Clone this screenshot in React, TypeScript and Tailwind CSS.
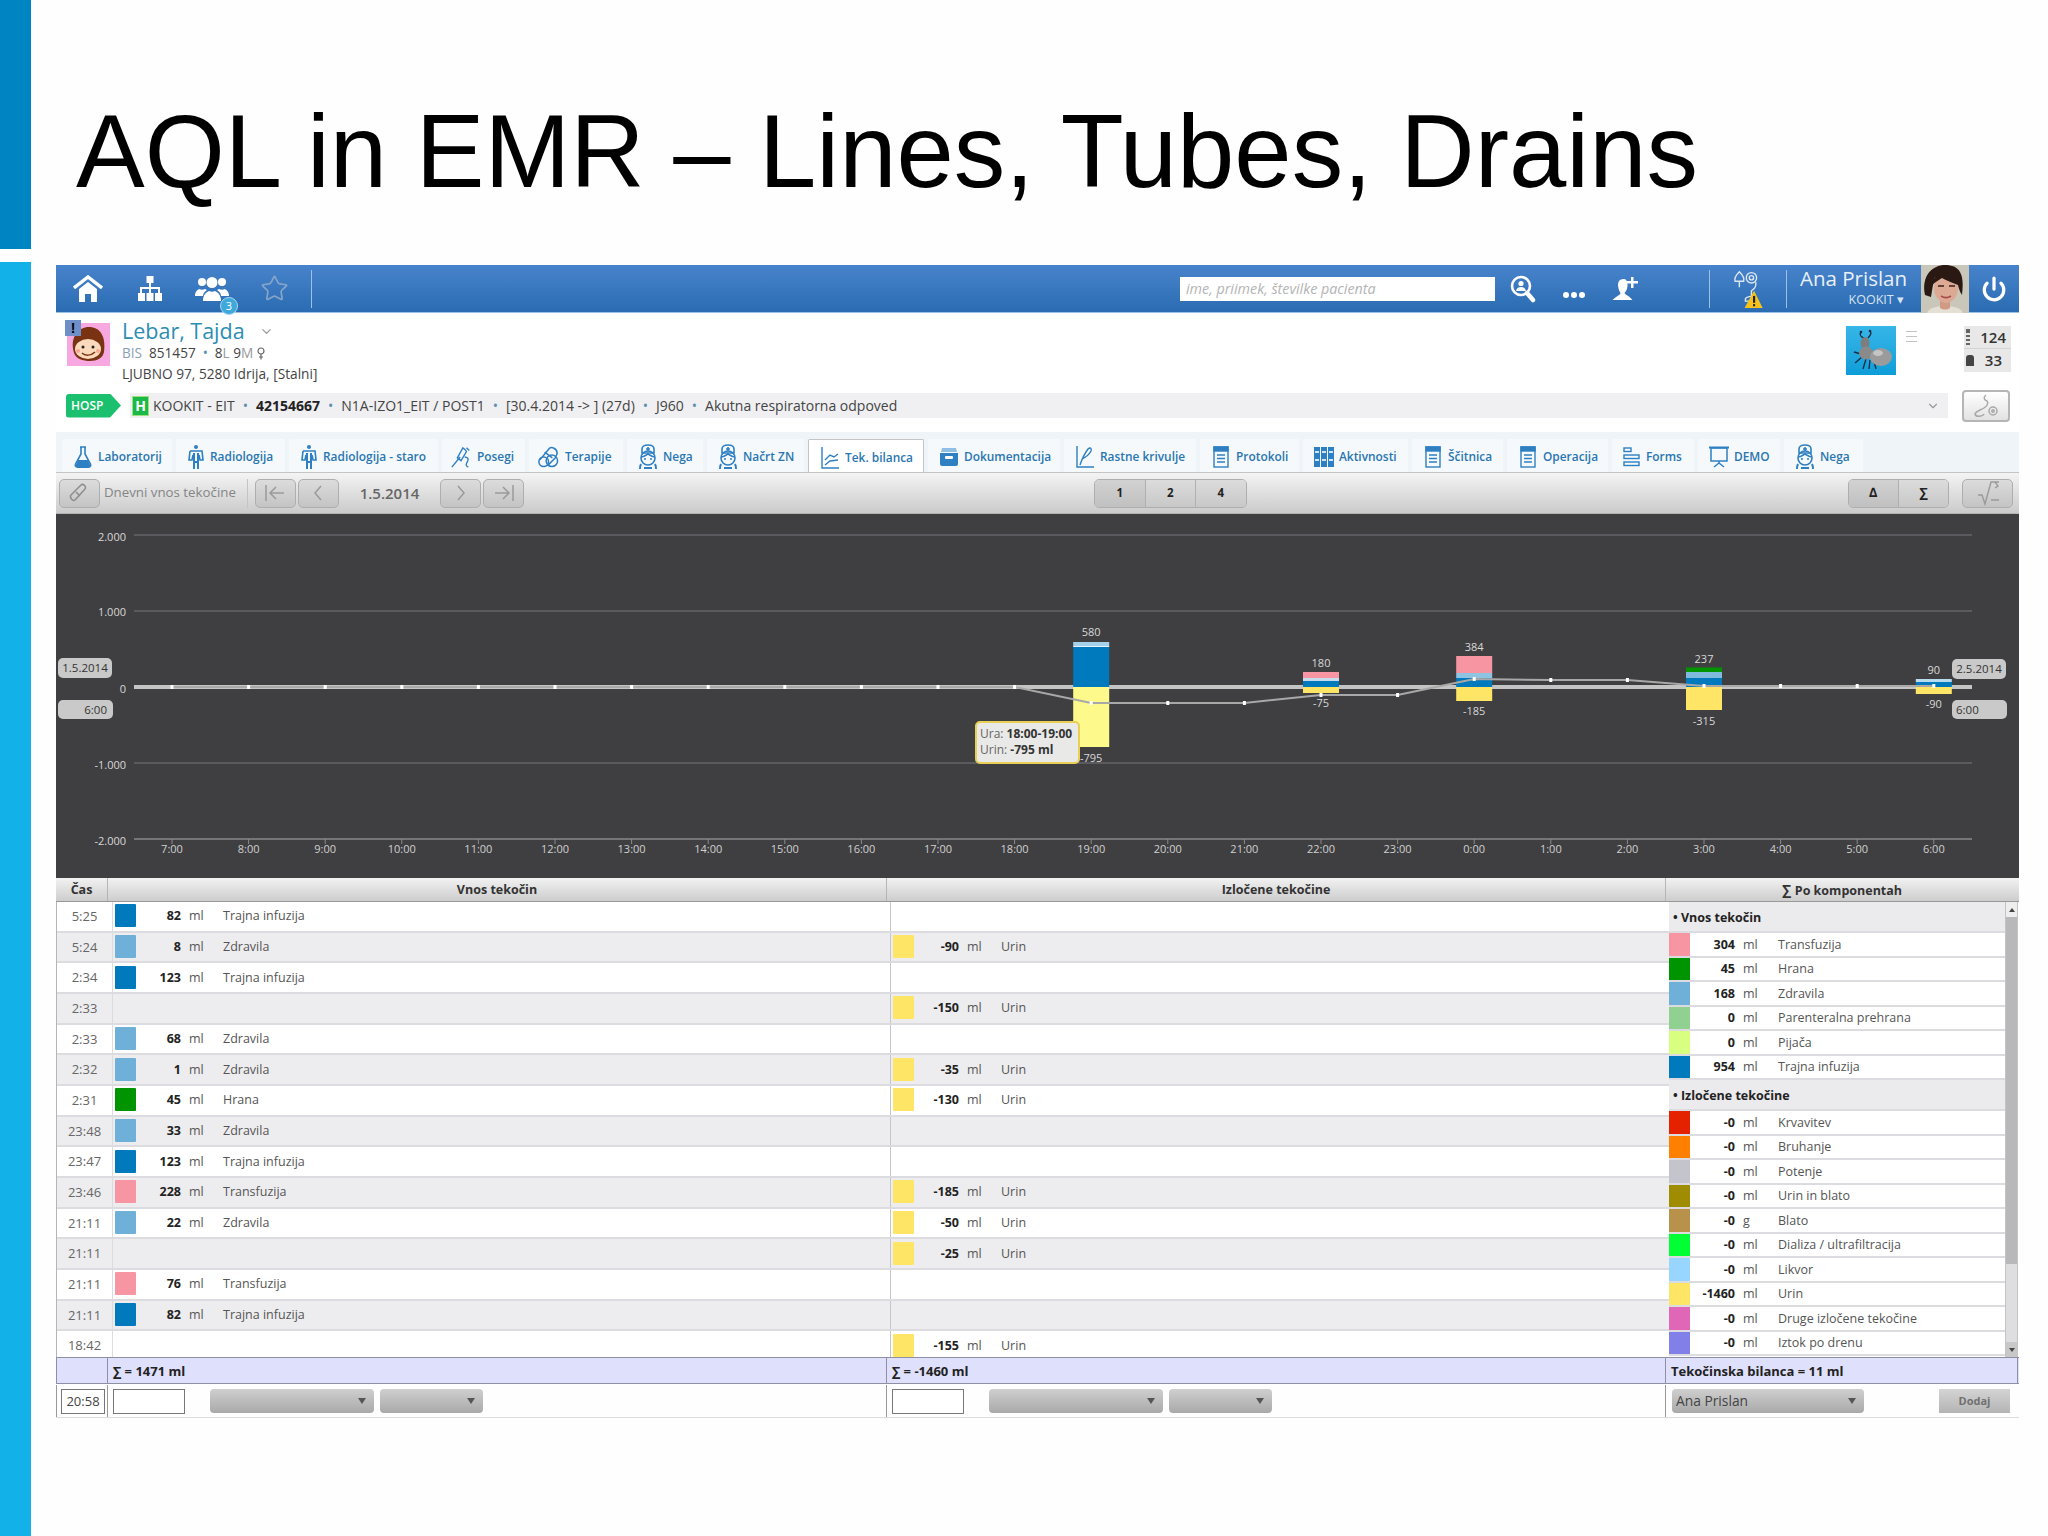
import React from 'react';
import { ChevronDown, Power, Star } from 'lucide-react';

const C = {
  trajna: 'bg-[#0079bd]',
  zdravila: 'bg-[#6fb0d8]',
  hrana: 'bg-[#009400]',
  transfuzija: 'bg-[#f795a3]',
  urin: 'bg-[#ffe566]',
};

type Side = { value: string; swatch: string; label: string } | null;

const rows: { time: string; inn: Side; out: Side }[] = [
  { time: '5:25', inn: { value: '82', swatch: C.trajna, label: 'Trajna infuzija' }, out: null },
  { time: '5:24', inn: { value: '8', swatch: C.zdravila, label: 'Zdravila' }, out: { value: '-90', swatch: C.urin, label: 'Urin' } },
  { time: '2:34', inn: { value: '123', swatch: C.trajna, label: 'Trajna infuzija' }, out: null },
  { time: '2:33', inn: null, out: { value: '-150', swatch: C.urin, label: 'Urin' } },
  { time: '2:33', inn: { value: '68', swatch: C.zdravila, label: 'Zdravila' }, out: null },
  { time: '2:32', inn: { value: '1', swatch: C.zdravila, label: 'Zdravila' }, out: { value: '-35', swatch: C.urin, label: 'Urin' } },
  { time: '2:31', inn: { value: '45', swatch: C.hrana, label: 'Hrana' }, out: { value: '-130', swatch: C.urin, label: 'Urin' } },
  { time: '23:48', inn: { value: '33', swatch: C.zdravila, label: 'Zdravila' }, out: null },
  { time: '23:47', inn: { value: '123', swatch: C.trajna, label: 'Trajna infuzija' }, out: null },
  { time: '23:46', inn: { value: '228', swatch: C.transfuzija, label: 'Transfuzija' }, out: { value: '-185', swatch: C.urin, label: 'Urin' } },
  { time: '21:11', inn: { value: '22', swatch: C.zdravila, label: 'Zdravila' }, out: { value: '-50', swatch: C.urin, label: 'Urin' } },
  { time: '21:11', inn: null, out: { value: '-25', swatch: C.urin, label: 'Urin' } },
  { time: '21:11', inn: { value: '76', swatch: C.transfuzija, label: 'Transfuzija' }, out: null },
  { time: '21:11', inn: { value: '82', swatch: C.trajna, label: 'Trajna infuzija' }, out: null },
  { time: '18:42', inn: null, out: { value: '-155', swatch: C.urin, label: 'Urin' } },
];

const intake = [
  { value: '304', unit: 'ml', swatch: C.transfuzija, label: 'Transfuzija' },
  { value: '45', unit: 'ml', swatch: C.hrana, label: 'Hrana' },
  { value: '168', unit: 'ml', swatch: C.zdravila, label: 'Zdravila' },
  { value: '0', unit: 'ml', swatch: 'bg-[#90d090]', label: 'Parenteralna prehrana' },
  { value: '0', unit: 'ml', swatch: 'bg-[#d8ff80]', label: 'Pijača' },
  { value: '954', unit: 'ml', swatch: C.trajna, label: 'Trajna infuzija' },
];

const output = [
  { value: '-0', unit: 'ml', swatch: 'bg-[#e52200]', label: 'Krvavitev' },
  { value: '-0', unit: 'ml', swatch: 'bg-[#ff7f00]', label: 'Bruhanje' },
  { value: '-0', unit: 'ml', swatch: 'bg-[#c4c4cc]', label: 'Potenje' },
  { value: '-0', unit: 'ml', swatch: 'bg-[#a08c00]', label: 'Urin in blato' },
  { value: '-0', unit: 'g', swatch: 'bg-[#b8924a]', label: 'Blato' },
  { value: '-0', unit: 'ml', swatch: 'bg-[#00ff33]', label: 'Dializa / ultrafiltracija' },
  { value: '-0', unit: 'ml', swatch: 'bg-[#99d6ff]', label: 'Likvor' },
  { value: '-1460', unit: 'ml', swatch: C.urin, label: 'Urin' },
  { value: '-0', unit: 'ml', swatch: 'bg-[#e066b8]', label: 'Druge izločene tekočine' },
  { value: '-0', unit: 'ml', swatch: 'bg-[#8080e8]', label: 'Iztok po drenu' },
];

/* ---- small icons ---- */
const Blue = '#2f80c2';

const Flask = () => (
  <svg width="20" height="24" viewBox="0 0 20 24" fill="none" stroke={Blue} strokeWidth="1.6">
    <path d="M7 2h6M8 2v7L2.5 19a2.2 2.2 0 0 0 2 3.2h11a2.2 2.2 0 0 0 2-3.2L12 9V2" />
    <path d="M5 15h10l3 7H2z" fill={Blue} stroke="none" />
  </svg>
);
const Body = () => (
  <svg width="18" height="26" viewBox="0 0 18 26" fill="none" stroke={Blue} strokeWidth="1.6">
    <circle cx="9" cy="3" r="2" fill={Blue} stroke="none" />
    <path d="M3 7h12l1 9h-3l-1-5M3 7 2 16h3l1-5" />
    <path d="M7 9v16M11 9v16M7 18h4" strokeWidth="2" />
  </svg>
);
const Syringe = () => (
  <svg width="22" height="24" viewBox="0 0 24 24" fill="none" stroke={Blue} strokeWidth="1.5" className="-ml-[3px]">
    <path d="M2 23 11 12M14 2c2 1 3 2 4 4l-6 10-4-3zM18 2l3 3" />
    <path d="M16 12c3 0 5 2 3 5s-2 5 1 6" />
  </svg>
);
const Pill = () => (
  <svg width="23" height="24" viewBox="0 0 24 24" fill="none" stroke={Blue} strokeWidth="1.6" className="-ml-[3px]">
    <path d="M3 15 13 3c2-2 8 0 8 5 0 1-1 3-2 4" />
    <circle cx="15.5" cy="16" r="6" />
    <path d="M8 7l8 6M11 21l9-9" />
    <circle cx="7" cy="17" r="5" />
  </svg>
);
const Nurse = () => (
  <svg width="20" height="26" viewBox="0 0 20 26" fill="none" stroke={Blue} strokeWidth="1.6">
    <path d="M4 9V5c0-2 2-4 6-4s6 2 6 4v4z" />
    <path d="M10 3v4M8 5h4" />
    <circle cx="10" cy="14" r="7" />
    <path d="M3 13c3 0 5-2 7-3 2 1 4 3 7 3" />
    <circle cx="7" cy="15" r="1" fill={Blue} stroke="none" />
    <circle cx="13" cy="15" r="1" fill={Blue} stroke="none" />
    <path d="M3 20c-1 2-1 3-1 5M17 20c1 2 1 3 1 5M6 24h8" strokeWidth="2" />
  </svg>
);
const Curve = ({ pen }: { pen?: boolean }) => (
  <svg width="20" height="24" viewBox="0 0 20 24" fill="none" stroke={Blue} strokeWidth="1.4">
    <path d="M2 1v21h17" />
    {pen ? <path d="M5 20c2-6 5-12 8-16 2-2 4-1 3 2-2 4-5 6-9 8" /> : <path d="M5 14l5-5 4 2 4-3M5 19l5-4 8-1" />}
  </svg>
);
const Box = () => (
  <svg width="20" height="22" viewBox="0 0 20 22">
    <path d="M3 2h14l1 4H2z" fill="#8fbfe2" />
    <path d="M1 7h18v11a2 2 0 0 1-2 2H3a2 2 0 0 1-2-2z" fill={Blue} />
    <rect x="6" y="10" width="8" height="3" rx="1" fill="#fff" />
  </svg>
);
const Doc = () => (
  <svg width="16" height="22" viewBox="0 0 16 22" fill="none" stroke={Blue} strokeWidth="1.4" className="ml-[2px] mr-[2px]">
    <rect x="1" y="1" width="14" height="20" />
    <rect x="1" y="1" width="14" height="4" fill={Blue} />
    <path d="M4 9h8M4 12.5h8M4 16h8" />
  </svg>
);
const Columns = () => (
  <svg width="20" height="20" viewBox="0 0 20 20" fill={Blue}>
    <rect x="0" y="0" width="6" height="20" />
    <rect x="7" y="0" width="6" height="20" />
    <rect x="14" y="0" width="6" height="20" />
    <path d="M1 12h4v2H1zM8 12h4v2H8zM15 12h4v2h-4zM1 4h4v2H1zM8 4h4v2H8zM15 4h4v2h-4z" fill="#cfe3f3" />
  </svg>
);
const Forms = () => (
  <svg width="18" height="20" viewBox="0 0 18 20" fill="none" stroke={Blue} strokeWidth="1.4">
    <rect x="1" y="1" width="7" height="3.5" />
    <rect x="1" y="8" width="15" height="3.5" />
    <rect x="1" y="15" width="15" height="3.5" />
  </svg>
);
const Board = () => (
  <svg width="20" height="22" viewBox="0 0 20 22" fill="none" stroke={Blue} strokeWidth="1.5">
    <path d="M0 1.5h20" strokeWidth="2" />
    <rect x="2" y="2" width="16" height="13" />
    <path d="M10 15v2M10 17l-5 4M10 17l5 4" />
  </svg>
);

const tabs: { label: string; w: string; icon: React.ReactNode; active?: boolean }[] = [
  { label: 'Laboratorij', w: 'w-[110px]', icon: <Flask /> },
  { label: 'Radiologija', w: 'w-[109px]', icon: <Body /> },
  { label: 'Radiologija - staro', w: 'w-[149px]', icon: <Body /> },
  { label: 'Posegi', w: 'w-[83px]', icon: <Syringe /> },
  { label: 'Terapije', w: 'w-[94px]', icon: <Pill /> },
  { label: 'Nega', w: 'w-[76px]', icon: <Nurse /> },
  { label: 'Načrt ZN', w: 'w-[97px]', icon: <Nurse /> },
  { label: 'Tek. bilanca', w: 'w-[116px]', icon: <Curve />, active: true },
  { label: 'Dokumentacija', w: 'w-[132px]', icon: <Box /> },
  { label: 'Rastne krivulje', w: 'w-[132px]', icon: <Curve pen /> },
  { label: 'Protokoli', w: 'w-[99px]', icon: <Doc /> },
  { label: 'Aktivnosti', w: 'w-[105px]', icon: <Columns /> },
  { label: 'Ščitnica', w: 'w-[91px]', icon: <Doc /> },
  { label: 'Operacija', w: 'w-[101px]', icon: <Doc /> },
  { label: 'Forms', w: 'w-[82px]', icon: <Forms /> },
  { label: 'DEMO', w: 'w-[82px]', icon: <Board /> },
  { label: 'Nega', w: 'w-[79px]', icon: <Nurse /> },
];

/* ---- header ---- */
const HomeIcon = () => (
  <svg width="30" height="28" viewBox="0 0 30 28" fill="#fff">
    <path d="M1 13 15 2l14 11" fill="none" stroke="#fff" strokeWidth="3.4" />
    <path d="M6 14 15 7l9 7v13h-6v-8h-6v8H6z" />
  </svg>
);
const OrgIcon = () => (
  <svg width="24" height="26" viewBox="0 0 24 26" fill="#fff">
    <rect x="8.5" y="0" width="7" height="7" />
    <rect x="0" y="17" width="7" height="8" />
    <rect x="8.5" y="17" width="7" height="8" />
    <rect x="17" y="17" width="7" height="8" />
    <path d="M11 7h2v4h9v6h-2v-4h-7v4h-2v-4H4v4H2v-6h9z" />
  </svg>
);
const PeopleIcon = () => (
  <svg width="36" height="26" viewBox="0 0 36 26" fill="#fff">
    <circle cx="8" cy="6" r="4" />
    <path d="M1 20c0-5 3-6 4-7 2 1 4 1 6 0l2 1c-3 2-4 4-4 6z" />
    <circle cx="28" cy="6" r="4" />
    <path d="M35 20c0-5-3-6-4-7-2 1-4 1-6 0l-2 1c3 2 4 4 4 6z" />
    <circle cx="18" cy="6.5" r="5.5" />
    <path d="M9 25c0-7 4-9 6-10 2 1 4 1 6 0 2 1 6 3 6 10z" />
  </svg>
);
const SearchIcon = () => (
  <svg width="26" height="28" viewBox="0 0 26 28" fill="none" stroke="#fff" strokeWidth="2.6">
    <circle cx="11" cy="11" r="9" />
    <path d="m17 18 6 7" strokeWidth="4.5" strokeLinecap="round" />
    <circle cx="11" cy="8.5" r="2.6" fill="#fff" stroke="none" />
    <path d="M6 16c1-3 2-4 5-4s4 1 5 4z" fill="#fff" stroke="none" />
  </svg>
);
const DotsIcon = () => (
  <svg width="24" height="8" viewBox="0 0 24 8" fill="#fff">
    <circle cx="4" cy="4" r="3" />
    <circle cx="12" cy="4" r="3" />
    <circle cx="20" cy="4" r="3" />
  </svg>
);
const AddUser = () => (
  <svg width="26" height="28" viewBox="0 0 26 28" fill="#fff">
    <path d="M12 4c-4 0-6 2-6 6s2 7 2.500 8c0 2-4 3-8 7h20c-3-4-7-5-8-7 2-2 3-5 3-8s-1-6-3.500-6z" />
    <path d="M19 2h2.500v4H26v2.500h-4.500V13H19V8.500h-4V6h4z" />
  </svg>
);
const AlertUser = () => (
  <svg width="32" height="38" viewBox="0 0 34 44" fill="none">
    <g stroke="#dbe7f3" strokeWidth="1.6">
      <path d="M7 2c-4 4-6 8-5 11h10c1-3-1-7-5-11zM7 13v7" />
      <circle cx="21" cy="9" r="6" />
      <circle cx="21" cy="9" r="2.500" />
      <path d="M26 14c1 6-2 8-5 10v6c-1 1-6 1-7 3v3h9" />
    </g>
    <path d="M24 24 34 44H13z" fill="#f6c21a" />
    <rect x="22.800" y="30" width="2.500" height="8" fill="#222" />
    <rect x="22.800" y="39.500" width="2.500" height="2.500" fill="#222" />
  </svg>
);

const Photo = () => (
  <svg width="48" height="48" viewBox="0 0 48 48" className="shrink-0">
    <rect width="48" height="48" fill="#c9c6ba" />
    <path d="M6 48c2-5 9-7 18-7s16 2 18 7z" fill="#e4e0d6" />
    <path d="M19 34h10v9c-3 2-7 2-10 0z" fill="#d09a84" />
    <path d="M4 30C0 10 12 0 24 0c14 0 20 8 17 30-3-4-4-10-5-14-8 0-18-1-22-4-2 6-3 14-4 20z" fill="#2a1812" />
    <ellipse cx="25" cy="23" rx="12" ry="15" fill="#dcaa94" />
    <path d="M11 20C12 10 22 5 36 9c2 4 2 8 1 11-6-2-12-5-16-7-3 2-7 4-10 7z" fill="#2a1812" />
    <path d="M17 21h6M28 21h6" stroke="#3a2018" strokeWidth="1.600" />
    <path d="M20 31c3 2 7 2 10 0" stroke="#a84a4a" strokeWidth="1.600" fill="none" />
  </svg>
);

const Avatar = () => (
  <div className="relative w-[43px] h-[43px] bg-[#f8a8e0] shrink-0">
    <svg width="43" height="43" viewBox="0 0 43 43">
      <path d="M7 30C2 14 12 4 22 4c11 0 17 9 15 25-1 6-7 9-14 9S9 36 7 30z" fill="#7a3312" />
      <ellipse cx="21" cy="26" rx="13" ry="10" fill="#fbd9bc" />
      <circle cx="16" cy="24" r="1.500" fill="#222" />
      <circle cx="26" cy="24" r="1.500" fill="#222" />
      <path d="M15 30c3 3 9 3 13-1" stroke="#7a3312" strokeWidth="1.500" fill="none" />
      <circle cx="11" cy="28" r="2" fill="#f4a890" />
      <circle cx="31" cy="28" r="2" fill="#f4a890" />
    </svg>
    <div className="absolute -left-[2px] -top-[3px] w-[16px] h-[16px] bg-[#6f8fc8] text-center font-['Liberation_Sans',sans-serif] font-bold text-[14px] leading-[16px] text-black">
      !
    </div>
  </div>
);

const Ant = () => (
  <div className="w-[50px] h-[49px] mt-[3px] bg-gradient-to-b from-[#35b6e8] to-[#0c9dd8] shrink-0">
    <svg width="50" height="49" viewBox="0 0 50 49" fill="none">
      <g stroke="#12304a" strokeWidth="1.400">
        <path d="M15 6c-2 3 0 5 3 6M24 5c2 2 0 5-2 7M15 28l-7-2M16 31l-7 6M20 33l-3 10M24 34l-1 9M28 35l2 8" />
      </g>
      <circle cx="15" cy="6" r="1.300" fill="#12304a" />
      <circle cx="24" cy="5" r="1.300" fill="#12304a" />
      <ellipse cx="19" cy="17" rx="4.500" ry="6" fill="#7d7d7d" />
      <ellipse cx="20" cy="27" rx="7" ry="6.500" fill="#8a8a8a" />
      <ellipse cx="35" cy="31" rx="11" ry="9" fill="#9b9b9b" />
      <ellipse cx="32" cy="27" rx="5" ry="3" fill="#c5c5c5" />
    </svg>
  </div>
);

const Toolbutton = ({ className, children }: { className: string; children?: React.ReactNode }) => (
  <div className={`h-[29px] flex items-center justify-center rounded-[5px] border border-[#aeaeae] bg-gradient-to-b from-[#dcdcdc] to-[#c4c4c4] text-[#8d8d8d] ${className}`}>
    {children}
  </div>
);

const Select = ({ className, label }: { className: string; label?: string }) => (
  <div className={`h-[24px] flex items-center justify-between pl-[4px] pr-[8px] rounded-[4px] bg-gradient-to-b from-[#cfcfcf] to-[#a9a9a9] text-[13.800px] text-[#444] ${className}`}>
    <span>{label}</span>
    <span className="w-0 h-0 border-x-[4px] border-x-transparent border-t-[6px] border-t-[#555]" />
  </div>
);

/* ---- chart ---- */
const hours = ['7:00','8:00','9:00','10:00','11:00','12:00','13:00','14:00','15:00','16:00','17:00','18:00','19:00','20:00','21:00','22:00','23:00','0:00','1:00','2:00','3:00','4:00','5:00','6:00'];
const tickX = (i: number) => 172 + i * 76.6;
const lineY = [687,687,687,687,687,687,687,687,687,687,687,687,703,703,703,695,695,679,680,680,686,686,686,686];

const bars = [
  { i: 12, top: 580, bot: '-795', topY: 632, botY: 758, segs: [[642, 646, '#a5d2ea'], [646, 647, '#e6f4fb'], [647, 687, '#0079bd'], [687, 747, '#fdf98a']] },
  { i: 15, top: 180, bot: '-75', topY: 663, botY: 703, segs: [[672, 678, '#f795a3'], [678, 681, '#c7dcec'], [681, 687, '#0079bd'], [687, 693, '#ffe566']] },
  { i: 17, top: 384, bot: '-185', topY: 647, botY: 711, segs: [[656, 673, '#f795a3'], [673, 678, '#8fc3e2'], [678, 687, '#0079bd'], [687, 701, '#ffe566']] },
  { i: 20, top: 237, bot: '-315', topY: 659, botY: 721, segs: [[667.5, 672, '#009400'], [672, 678, '#7fb9dc'], [678, 687, '#0079bd'], [687, 710, '#ffe566']] },
  { i: 23, top: 90, bot: '-90', topY: 670, botY: 704, segs: [[679, 682, '#b9dbee'], [682, 687, '#0079bd'], [687, 694, '#ffe566']] },
] as const;

const Chart = () => (
  <div className="relative h-[364px] bg-[#3f3f41]">
    <svg width="1963" height="364" viewBox="56 514 1963 364" fontFamily="Open Sans, sans-serif" fontSize="11">
      {[535, 611, 763].map((y) => (
        <line key={y} x1="134" x2="1972" y1={y} y2={y} stroke="#66666a" strokeWidth="1.500" />
      ))}
      <line x1="134" x2="1972" y1="839" y2="839" stroke="#8a8a8c" strokeWidth="1.500" />
      {hours.map((h, i) => (
        <g key={h}>
          <line x1={tickX(i)} x2={tickX(i)} y1="839" y2="844" stroke="#8a8a8c" />
          <text x={tickX(i)} y="853" textAnchor="middle" fill="#d0d0d0">{h}</text>
        </g>
      ))}
      {[['2.000', 541], ['1.000', 616], ['0', 693], ['-1.000', 769], ['-2.000', 845]].map(([t, y]) => (
        <text key={t} x="126" y={y} textAnchor="end" fill="#d8d8d8">{t}</text>
      ))}
      <rect x="134" y="685" width="1838" height="4" fill="#c4c4c4" />
      {bars.map((b) => (
        <g key={b.i}>
          {b.segs.map(([y1, y2, c]) => (
            <rect key={y1} x={tickX(b.i) - 18} y={y1} width="36" height={y2 - y1} fill={c} />
          ))}
          <text x={tickX(b.i)} y={b.topY + 4} textAnchor="middle" fill="#d8d8d8">{b.top}</text>
          <text x={tickX(b.i)} y={b.botY + 4} textAnchor="middle" fill="#d8d8d8">{b.bot}</text>
        </g>
      ))}
      <polyline
        points={lineY.map((y, i) => `${tickX(i)},${y}`).join(' ')}
        fill="none"
        stroke="#a8a8a8"
        strokeWidth="2"
      />
      {lineY.map((y, i) => (
        <rect key={i} x={tickX(i) - 1.5} y={y - 2} width="3" height="4" fill="#fff" />
      ))}
      <g fontSize="11.500" fill="#333">
        <rect x="58" y="658" width="54" height="20" rx="5" fill="#c9c9c9" />
        <text x="85" y="672" textAnchor="middle">1.5.2014</text>
        <rect x="58" y="700" width="55" height="19" rx="5" fill="#c9c9c9" />
        <text x="107" y="714" textAnchor="end">6:00</text>
        <rect x="1952" y="659" width="54" height="20" rx="5" fill="#c9c9c9" />
        <text x="1979" y="673" textAnchor="middle">2.5.2014</text>
        <rect x="1952" y="700" width="55" height="19" rx="5" fill="#c9c9c9" />
        <text x="1956" y="714">6:00</text>
      </g>
    </svg>
    <div className="absolute left-[919px] top-[207px] w-[105px] h-[43px] rounded-[5px] border-2 border-[#e9cf55] bg-[#e9e9e7] pl-[3px] text-[12px] leading-[16px] pt-[3px] text-[#666] whitespace-nowrap">
      <div>Ura: <b className="text-[#333]">18:00-19:00</b></div>
      <div>Urin: <b className="text-[#333]">-795 ml</b></div>
    </div>
  </div>
);

/* ---- table ---- */
const Entry = ({ data }: { data: Side }) => {
  if (!data) return null;
  return (
    <>
      <div className={`w-[21px] h-[23px] shrink-0 rounded-[1px] -mt-[1px] ${data.swatch}`} />
      <div className="w-[45px] pt-[1px] text-right font-bold text-[#222] shrink-0">{data.value}</div>
      <div className="w-[42px] pt-[1px] pl-[8px] text-[#555] shrink-0">ml</div>
      <div className="pt-[1px] text-[#555]">{data.label}</div>
    </>
  );
};

const TableHead = () => (
  <div className="flex h-[24px] bg-gradient-to-b from-[#f2f2f2] to-[#cdcdcd] border-b border-[#999] text-[12.500px] font-bold text-[#333] text-center leading-[24px]">
    <div className="w-[51px]">Čas</div>
    <div className="w-[779px] border-l border-[#b5b5b5]">Vnos tekočin</div>
    <div className="w-[779px] border-l border-[#b5b5b5]">Izločene tekočine</div>
    <div className="w-[353px] border-l border-[#b5b5b5]"><span className="text-[14px] mr-[4px]">∑</span>Po komponentah</div>
  </div>
);

const Rows = () => (
  <div className="w-[1613px] h-[455px] overflow-hidden text-[12.500px] border-l border-[#b5b5b5]">
    {rows.map((r, i) => (
      <div
        key={i}
        className={`flex h-[30.670px] items-center border-b-2 border-[#dcdce0] ${i % 2 ? 'bg-[#ededef]' : 'bg-white'}`}
      >
        <div className="w-[55px] pt-[1px] text-center text-[13px] text-[#666] shrink-0">{r.time}</div>
        <div className="flex items-center w-[778px] pl-[2px] h-full shrink-0 border-l border-[#dcdce0]">
          <Entry data={r.inn} />
        </div>
        <div className="flex items-center w-[779px] pl-[2px] h-full border-l border-[#c5c5cc]">
          <Entry data={r.out} />
        </div>
      </div>
    ))}
  </div>
);

const SummaryRow = ({ swatch, value, unit, label }: { swatch: string; value: string; unit: string; label: string }) => (
  <div className="flex h-[24.500px] items-center bg-white border-b-2 border-[#dcdce0] text-[12.500px]">
    <div className={`w-[21px] h-full shrink-0 ${swatch}`} />
    <div className="w-[45px] pt-[2px] text-right font-bold text-[#222]">{value}</div>
    <div className="w-[43px] pt-[2px] pl-[8px] text-[#555]">{unit}</div>
    <div className="pt-[2px] text-[#555]">{label}</div>
  </div>
);

const GroupHead = ({ children }: { children: React.ReactNode }) => (
  <div className="h-[31px] bg-[#ebebed] flex items-center pl-[4px] pt-[3px] text-[12.500px] font-bold text-[#222] border-b-2 border-[#dcdce0]">
    {children}
  </div>
);

const Components = () => (
  <div className="w-[349px] h-[455px] flex overflow-hidden">
    <div className="w-[336px] shrink-0">
      <GroupHead>• Vnos tekočin</GroupHead>
      {intake.map((r) => <SummaryRow key={r.label} {...r} />)}
      <GroupHead>• Izločene tekočine</GroupHead>
      {output.map((r) => <SummaryRow key={r.label} {...r} />)}
    </div>
    <div className="w-[13px] flex flex-col bg-[#dedee0] border-x border-[#c4c4c4]">
      <div className="h-[15px] flex items-center justify-center bg-[#eeeeee]">
        <span className="w-0 h-0 border-x-[3px] border-x-transparent border-b-[4px] border-b-[#444]" />
      </div>
      <div className="h-[347px] bg-[#b8b8ba]" />
      <div className="flex-1" />
      <div className="h-[15px] flex items-center justify-center bg-[#c8c8c8]">
        <span className="w-0 h-0 border-x-[3px] border-x-transparent border-t-[4px] border-t-[#444]" />
      </div>
    </div>
  </div>
);

const Sums = () => (
  <div className="flex h-[27px] bg-[#dfe0fb] border-y border-[#8e8ea4] text-[13px] font-bold text-[#222] leading-[27px]">
    <div className="w-[51px] border-l border-[#8e8ea4]" />
    <div className="w-[779px] border-l border-[#8e8ea4] pl-[5px]">∑ = 1471 ml</div>
    <div className="w-[779px] border-l border-[#8e8ea4] pl-[5px]">∑ = -1460 ml</div>
    <div className="w-[353px] border-x border-[#8e8ea4] pl-[5px]">Tekočinska bilanca = 11 ml</div>
  </div>
);

const InputBox = ({ className, children }: { className: string; children?: React.ReactNode }) => (
  <div className={`h-[25px] border border-[#777] bg-white text-[13px] text-[#444] text-center leading-[23px] shrink-0 ${className}`}>{children}</div>
);

const Inputs = () => (
  <div className="flex h-[34px] pt-[1px] border-b border-[#ddd]">
    <div className="w-[51px] flex items-center pl-[4px] border-l border-[#999]">
      <InputBox className="w-[44px]">20:58</InputBox>
    </div>
    <div className="w-[779px] flex items-center border-l border-[#999] pl-[5px] gap-[6px]">
      <InputBox className="w-[72px] mr-[19px]" />
      <Select className="w-[164px]" />
      <Select className="w-[103px]" />
    </div>
    <div className="w-[779px] flex items-center border-l border-[#999] pl-[5px] gap-[6px]">
      <InputBox className="w-[72px] mr-[19px]" />
      <Select className="w-[174px]" />
      <Select className="w-[103px]" />
    </div>
    <div className="w-[353px] flex items-center justify-between border-l border-[#999] pl-[6px] pr-[8px]">
      <Select className="w-[192px]" label="Ana Prislan" />
      <div className="w-[71px] h-[24px] bg-gradient-to-b from-[#d4d4d4] to-[#b4b4b4] text-center text-[11px] font-bold leading-[24px] text-[#707070]">Dodaj</div>
    </div>
  </div>
);

const Female = () => (
  <svg width="8" height="13" viewBox="0 0 8 13" fill="none" stroke="#666" strokeWidth="1.200" className="ml-[4px]">
    <circle cx="4" cy="4" r="3" />
    <path d="M4 7v5.500M2 10h4" />
  </svg>
);

const Dot = () => <span className="mx-[8px] text-[#5c8fb0]">•</span>;

export default function App() {
  return (
    <div className="w-[2048px] h-[1536px] flex bg-[#fefefe] overflow-hidden font-['Open_Sans',sans-serif]">
      <div className="w-[31px] shrink-0 flex flex-col gap-[13px]">
        <div className="h-[249px] bg-[#0085c3]" />
        <div className="flex-1 bg-[#12b2e8]" />
      </div>

      <div className="flex-1 flex flex-col">
        <div className="h-[265px] pt-[100px] pl-[45px] font-['Liberation_Sans',sans-serif] text-[103px] leading-none text-black whitespace-nowrap">
          AQL in EMR – Lines, Tubes, Drains
        </div>

        <div className="ml-[25px] w-[1963px] flex flex-col">
          {/* top bar */}
          <div className="h-[48px] flex items-center bg-gradient-to-b from-[#4783cc] to-[#2a6cb2] border-b border-[#9cc0e6] text-white">
            <div className="w-[63px] flex justify-center"><HomeIcon /></div>
            <div className="w-[62px] flex justify-center"><OrgIcon /></div>
            <div className="w-[62px] flex justify-center relative">
              <PeopleIcon />
              <div className="absolute left-[39px] top-[21px] w-[18px] h-[18px] rounded-full bg-[#3fa9dc] border border-[#a8d8f0] text-[11px] leading-[16px] text-center">3</div>
            </div>
            <div className="w-[62px] flex justify-center">
              <Star size={29} strokeWidth={1.4} className="text-[#86a4c9]" />
            </div>
            <div className="w-[1px] h-[38px] ml-[6px] bg-[#9cc0e6]" />
            <div className="ml-[868px] w-[315px] h-[24px] bg-white text-[14.300px] italic text-[#b4b4b4] pl-[6px] leading-[24px] whitespace-nowrap">
              ime, priimek, številke pacienta
            </div>
            <div className="ml-[15px]"><SearchIcon /></div>
            <div className="ml-[26px] mt-[12px]"><DotsIcon /></div>
            <div className="ml-[26px]"><AddUser /></div>
            <div className="w-[1px] h-[38px] ml-[71px] bg-[#9cc0e6]" />
            <div className="ml-[22px]"><AlertUser /></div>
            <div className="w-[1px] h-[38px] ml-[22px] bg-[#9cc0e6]" />
            <div className="ml-[13px] w-[121px] flex flex-col -mt-[4px]">
              <div className="text-[20.500px] leading-[25px] text-[#e8f0f8] whitespace-nowrap">Ana Prislan</div>
              <div className="text-[12.500px] leading-[17px] text-right pr-[17px] text-[#d7e4f2] whitespace-nowrap">KOOKIT ▾</div>
            </div>
            <Photo />
            <div className="flex-1 flex justify-center">
              <Power size={26} strokeWidth={3} className="text-white" />
            </div>
          </div>

          {/* patient */}
          <div className="h-[119px] flex flex-col bg-white">
            <div className="h-[80px] flex pl-[11px] pt-[10px] pr-[8px]">
              <Avatar />
              <div className="ml-[12px] -mt-[4px] text-[#444]">
                <div className="h-[24px] flex items-center gap-[14px] text-[21.500px] text-[#2c8db4]">
                  Lebar, Tajda <ChevronDown size={15} className="text-[#999]" />
                </div>
                <div className="h-[20px] flex items-center text-[13.600px]">
                  <span className="text-[#8aa0b4] mr-[7px]">BIS</span> 851457 <span className="mx-[7px] text-[#5c8fb0]">•</span> 8<span className="text-[#999]">L</span>&nbsp;9<span className="text-[#999]">M</span><Female />
                </div>
                <div className="h-[22px] flex items-center text-[13.700px] pt-[1px]">LJUBNO 97, 5280 Idrija, [Stalni]</div>
              </div>
              <div className="ml-auto flex">
                <Ant />
                <div className="ml-[10px] mt-[8px] w-[11px] h-[11px] border-y border-[#c2c2c2] relative">
                  <div className="absolute top-[4px] w-full h-[1px] bg-[#c2c2c2]" />
                </div>
                <div className="ml-[47px] mt-[3px] w-[47px] h-[46px] bg-[#e8e8e8] text-[15px] text-[#333] font-semibold">
                  <div className="h-[23px] flex items-center justify-between pl-[2px] pr-[5px] border-b border-[#d4d4d4]">
                    <span className="w-[4px] h-[16px] border-y-[2px] border-[#666] [background:repeating-linear-gradient(#666_0_2px,transparent_2px_4px)]" />
                    124
                  </div>
                  <div className="h-[23px] flex items-center justify-between pl-[2px] pr-[9px]">
                    <span className="w-[8px] h-[11px] bg-[#444] rounded-t-[3px]" />
                    33
                  </div>
                </div>
              </div>
            </div>

            <div className="h-[25px] flex items-center pl-[10px] pr-[8px]">
              <div className="w-[55px] h-[24px] bg-[#1bc06e] text-white text-[12px] font-semibold leading-[24px] pl-[5px] [clip-path:polygon(0_0,80%_0,100%_50%,80%_100%,0_100%)] rounded-l-[3px]">HOSP</div>
              <div className="ml-[9px] w-[1818px] h-[25px] bg-[#f0f0f2] flex items-center text-[14px] text-[#444] whitespace-pre">
                <span className="w-[17px] h-[20px] ml-[2px] mr-[4px] bg-[#1bb84a] border border-[#9be27e] text-white font-bold text-[14px] leading-[18px] text-center">H</span>
                KOOKIT - EIT<Dot /><b className="font-bold text-[#222]">42154667</b><Dot />N1A-IZO1_EIT / POST1<Dot />[30.4.2014 -&gt; ] (27d)<Dot />J960<Dot />Akutna respiratorna odpoved
                <ChevronDown size={14} className="ml-auto mr-[8px] text-[#999]" />
              </div>
              <div className="ml-[14px] w-[48px] h-[32px] rounded-[4px] border-2 border-[#b5b5b5] bg-gradient-to-b from-white to-[#e2e2e2] flex items-center justify-center">
                <svg width="28" height="26" viewBox="0 0 28 26" fill="none" stroke="#a8a8a8" strokeWidth="1.500">
                  <path d="M14 2c-3 2-2 5 1 6 2 2 0 5-3 7-3 2-8 3-9 6 1 4 8 2 9 0" />
                  <circle cx="21" cy="18" r="4" />
                  <circle cx="21" cy="18" r="1.200" />
                </svg>
              </div>
            </div>
          </div>

          {/* tabs */}
          <div className="h-[41px] flex items-end gap-[4px] pl-[6px] bg-[#eef4f7] border-b border-[#c4c4c4]">
            {tabs.map((t, i) => (
              <div
                key={i}
                className={`${t.w} shrink-0 h-[33px] flex items-center gap-[5px] pl-[11px] pt-[3px] rounded-t-[2px] text-[11.900px] font-semibold text-[#2a76b2] whitespace-nowrap ${
                  t.active ? 'bg-white border-x border-t border-[#c4c4c4]' : 'bg-[#f5f9fb]'
                }`}
              >
                <span className="shrink-0 flex">{t.icon}</span>
                {t.label}
              </div>
            ))}
          </div>

          {/* toolbar */}
          <div className="h-[41px] flex items-center pl-[3px] pr-[6px] bg-gradient-to-b from-[#f4f4f4] to-[#cbcbcb] border-b border-[#b4b4b4]">
            <Toolbutton className="w-[41px]">
              <svg width="22" height="22" viewBox="0 0 22 22" fill="none" stroke="#8d8d8d" strokeWidth="1.500">
                <path d="M3 13 13 3c2-2 6 2 4 4L7 18c-2 2-6-3-4-5zM8 10l4 4" />
              </svg>
            </Toolbutton>
            <span className="ml-[4px] text-[13.300px] text-[#858585] whitespace-nowrap">Dnevni vnos tekočine</span>
            <div className="ml-[11px] h-[29px] w-[1px] bg-[#c4c4c4]" />
            <Toolbutton className="w-[41px] ml-[7px]">
              <svg width="22" height="18" viewBox="0 0 22 18" fill="none" stroke="#9a9a9a" strokeWidth="1.500"><path d="M2 1v16M20 9H6M12 3 6 9l6 6" /></svg>
            </Toolbutton>
            <Toolbutton className="w-[41px] ml-[2px]">
              <svg width="12" height="18" viewBox="0 0 12 18" fill="none" stroke="#9a9a9a" strokeWidth="1.500"><path d="M9 2 3 9l6 7" /></svg>
            </Toolbutton>
            <span className="w-[102px] text-center text-[15px] font-semibold text-[#666]">1.5.2014</span>
            <Toolbutton className="w-[41px]">
              <svg width="12" height="18" viewBox="0 0 12 18" fill="none" stroke="#9a9a9a" strokeWidth="1.500"><path d="m3 2 6 7-6 7" /></svg>
            </Toolbutton>
            <Toolbutton className="w-[41px] ml-[2px]">
              <svg width="22" height="18" viewBox="0 0 22 18" fill="none" stroke="#9a9a9a" strokeWidth="1.500"><path d="M20 1v16M2 9h14M10 3l6 6-6 6" /></svg>
            </Toolbutton>
            <div className="ml-[570px] w-[153px] h-[29px] flex rounded-[5px] border border-[#aeaeae] overflow-hidden text-[11.500px] font-bold text-[#222]">
              <div className="flex-1 flex items-center justify-center bg-gradient-to-b from-[#d2d2d2] to-[#c0c0c0] border-r border-[#b0b0b0]">1</div>
              <div className="flex-1 flex items-center justify-center bg-gradient-to-b from-[#dcdcdc] to-[#c8c8c8] border-r border-[#b0b0b0]">2</div>
              <div className="flex-1 flex items-center justify-center bg-gradient-to-b from-[#dcdcdc] to-[#c8c8c8]">4</div>
            </div>
            <div className="ml-[601px] w-[102px] h-[29px] flex rounded-[5px] border border-[#aeaeae] overflow-hidden text-[13px] font-bold text-[#222]">
              <div className="flex-1 flex items-center justify-center bg-gradient-to-b from-[#d2d2d2] to-[#c0c0c0] border-r border-[#b0b0b0]">∆</div>
              <div className="flex-1 flex items-center justify-center bg-gradient-to-b from-[#dcdcdc] to-[#c8c8c8]">∑</div>
            </div>
            <Toolbutton className="w-[51px] ml-[13px]">
              <svg width="28" height="26" viewBox="0 0 28 26" fill="none" stroke="#9a9a9a" strokeWidth="1.400"><path d="M4 15h4l3 9 6-22h8M17 20h8M21 2l3 4-3 2" /></svg>
            </Toolbutton>
          </div>

          <Chart />
          <TableHead />
          <div className="flex">
            <Rows />
            <Components />
          </div>
          <Sums />
          <Inputs />
        </div>
      </div>
    </div>
  );
}
